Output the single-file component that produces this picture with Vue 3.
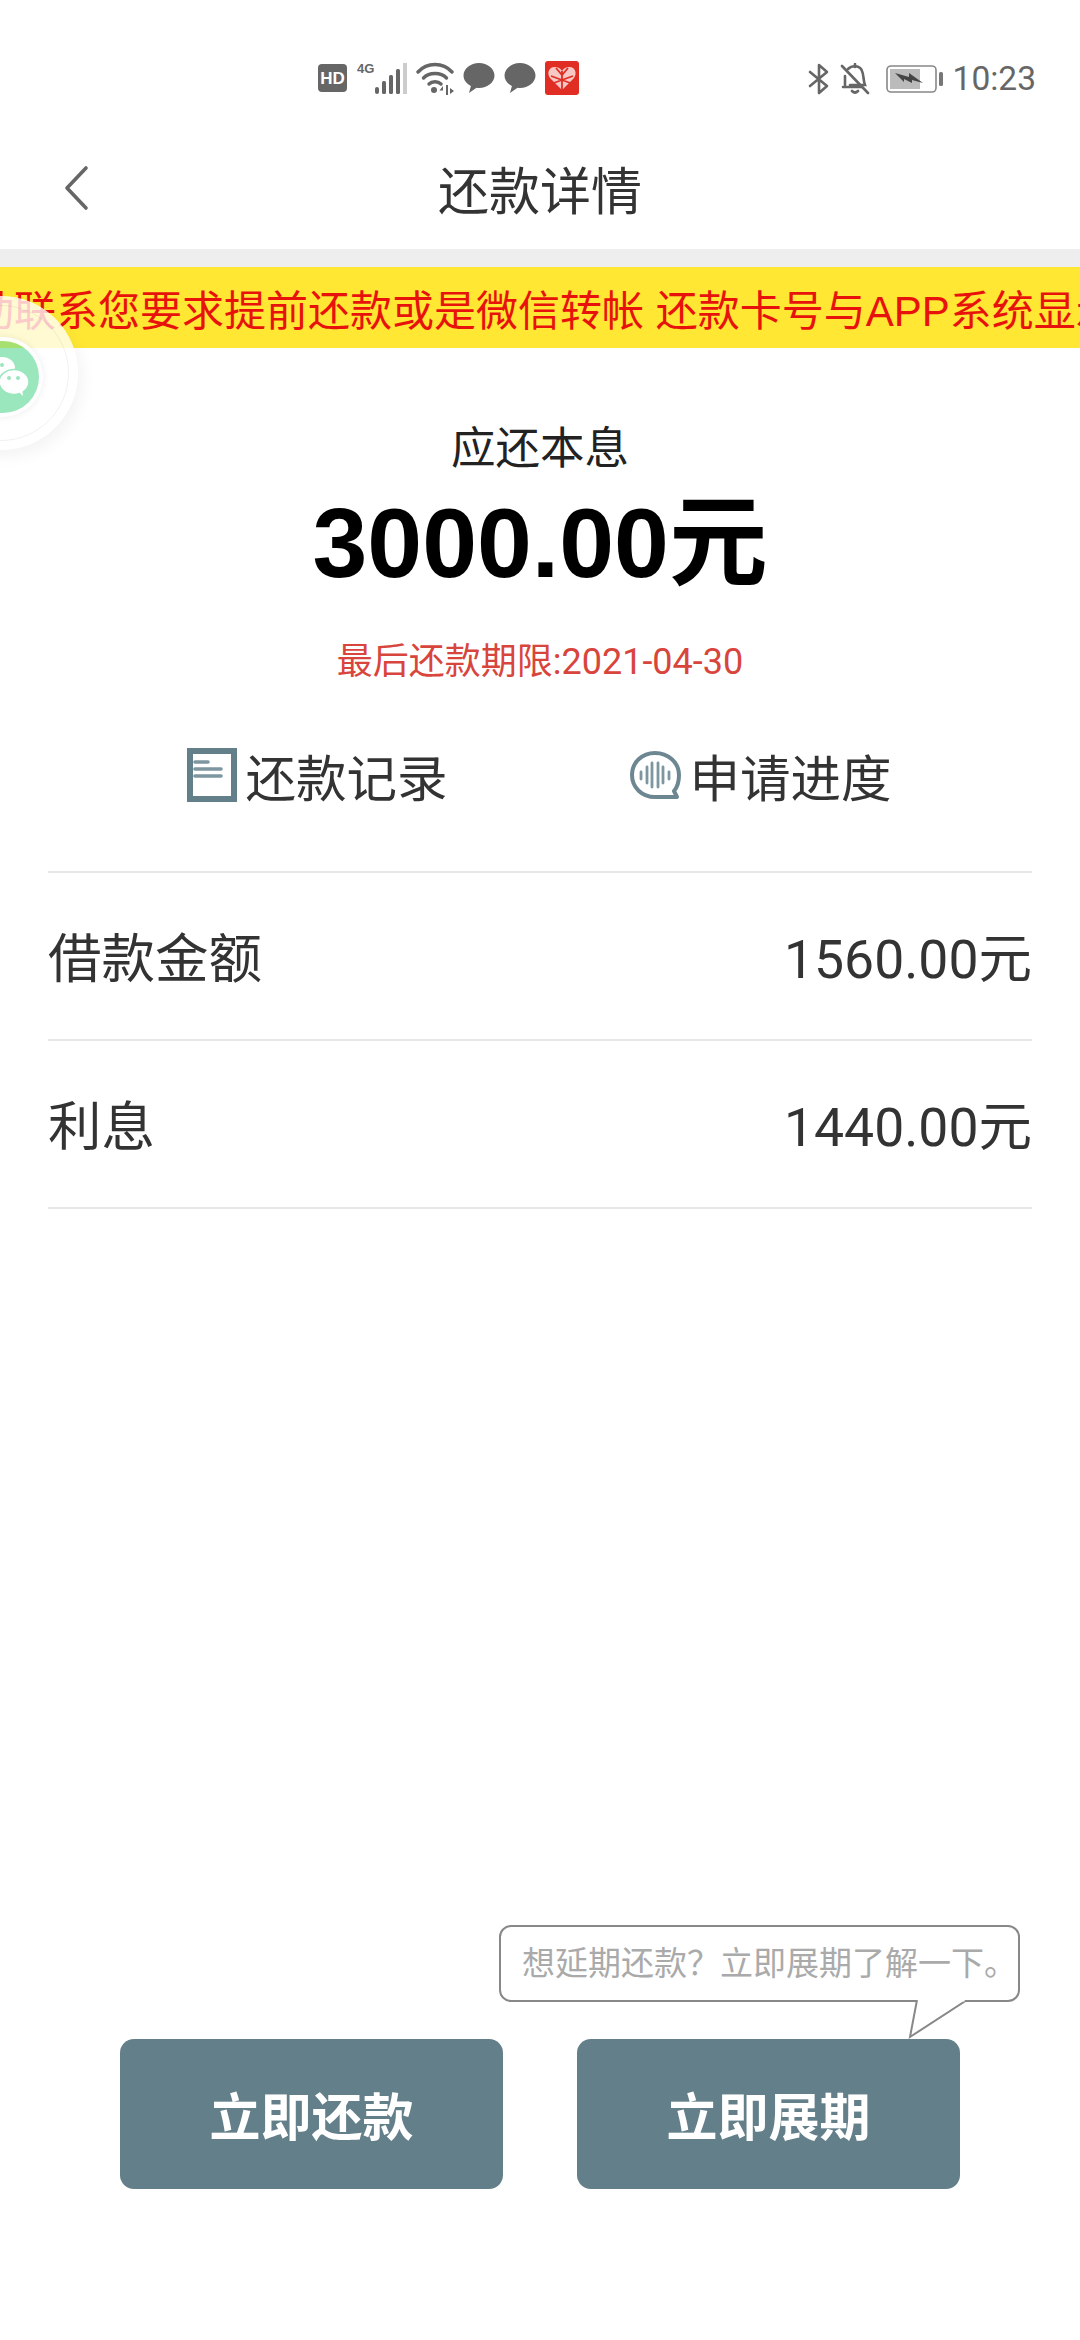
<template>
  <div class="page">
    <div class="statusbar">
      <div class="st-left">
        <svg width="30" height="30" viewBox="0 0 30 30"><rect y="1" width="29" height="28" rx="4" fill="#666"/><text x="14.500" y="21" text-anchor="middle" class="hd">HD</text></svg>
        <svg width="50" height="34" viewBox="0 0 50 34">
          <text x="0" y="12" class="fourg">4G</text>
          <rect x="18" y="26" width="4" height="7" rx="2" fill="#666"/>
          <rect x="25" y="20" width="4" height="13" rx="1.500" fill="#666"/>
          <rect x="32" y="14" width="4" height="19" rx="1.500" fill="#666"/>
          <rect x="39" y="8" width="4" height="25" rx="1.500" fill="#666"/>
          <rect x="46" y="2" width="4" height="31" fill="#ccc"/>
        </svg>
        <svg width="38" height="34" viewBox="0 0 38 34">
          <g fill="none" stroke="#666" stroke-width="3.400" stroke-linecap="round">
            <path d="M2 11C11 1 27 1 36 11"/><path d="M7.500 17C13 11 25 11 30.500 17"/><path d="M13 23C16 20 22 20 25 23"/>
          </g>
          <circle cx="18" cy="29" r="3" fill="#666"/>
          <path d="M27 25l-3.500 4.500H27zM30 24h2v10h-2zM34 27l4 3-4 3z" fill="#666"/>
        </svg>
        <svg width="32" height="32" viewBox="0 0 32 32"><path d="M16 1C7.500 1 .5 6.700.5 13.500c0 4.400 3 8.300 7.400 10.500L6 31l7.500-5.200c.8.100 1.700.200 2.500.200 8.500 0 15.500-5.600 15.500-12.500S24.500 1 16 1z" fill="#666"/></svg>
        <svg width="32" height="32" viewBox="0 0 32 32"><path d="M16 1C7.500 1 .5 6.700.5 13.500c0 4.400 3 8.300 7.400 10.500L6 31l7.500-5.200c.8.100 1.700.200 2.500.200 8.500 0 15.500-5.600 15.500-12.500S24.500 1 16 1z" fill="#666"/></svg>
        <svg width="34" height="34" viewBox="0 0 34 34">
          <rect width="34" height="34" rx="3" fill="#e02e24"/>
          <path d="M17 29L5 17C1.500 12 4 6 9.500 6c3.500 0 6 1.500 7.500 4 1.500-2.500 4-4 7.500-4C30 6 32.500 12 29 17z" fill="#f6c9c5"/>
          <path d="M17 10v19M6 15l22 8M28 15L6 23M11 7l6 7 6-7" stroke="#e02e24" stroke-width="1.800" fill="none"/>
        </svg>
      </div>
      <div class="st-right">
        <svg class="bt" width="22" height="32" viewBox="0 0 22 32"><path d="M2 9l17 14-8 7V2l8 7L2 23" fill="none" stroke="#666" stroke-width="2.600" stroke-linecap="round" stroke-linejoin="round"/></svg>
        <svg class="bell" width="30" height="32" viewBox="0 0 30 32">
          <path d="M5 22V13M8 6c4-4 12-4 14 2 2 4 1 9 3 14H10M3 24h19M12 28c2 2 4 2 6 0" fill="none" stroke="#666" stroke-width="2.600" stroke-linecap="round"/>
          <path d="M15 1v3M2 3l26 27" fill="none" stroke="#666" stroke-width="2.600" stroke-linecap="round"/>
        </svg>
        <svg class="batt" width="58" height="28" viewBox="0 0 58 28">
          <rect x="1" y="1" width="49" height="26" rx="4" fill="none" stroke="#888" stroke-width="1.600"/>
          <rect x="4" y="4" width="30" height="20" fill="#bbb"/>
          <rect x="53" y="7" width="4" height="14" rx="1.500" fill="#777"/>
          <path d="M9 8l14 4 0-4 14 10-11-3 0 3-8-4 0 3z" fill="#444"/>
        </svg>
        <span class="time">10:23</span>
      </div>
    </div>

    <header class="navbar">
      <svg class="back" width="26" height="46" viewBox="0 0 26 46"><path d="M23 3L4 23l19 20" fill="none" stroke="#666" stroke-width="3.600" stroke-linecap="round" stroke-linejoin="round"/></svg>
      <h1 class="title">还款详情</h1>
    </header>

    <div class="notice">
      <span class="notice-text">主动联系您要求提前还款或是微信转帐 还款卡号与APP系统显示</span>
    </div>

    <div class="float-wx">
      <div class="ring">
        <div class="wx">
          <svg width="72" height="72" viewBox="0 0 72 72">
            <ellipse cx="35" cy="27" rx="13" ry="11" fill="#fff"/>
            <ellipse cx="47" cy="41" rx="15" ry="12.500" fill="#fff" stroke="#9ae6bd" stroke-width="1.500"/>
            <path d="M51 50l5 5-1-8z" fill="#fff"/>
            <circle cx="35" cy="24" r="2" fill="#9ae6bd"/>
            <circle cx="42" cy="37" r="2" fill="#9ae6bd"/>
            <circle cx="51" cy="37" r="2" fill="#9ae6bd"/>
          </svg>
        </div>
      </div>
    </div>

    <main class="main">
      <section class="summary">
        <div class="sum-label">应还本息</div>
        <div class="sum-amount">3000.00元</div>
        <div class="sum-date">最后还款期限:2021-04-30</div>
      </section>

      <div class="links">
        <div class="link">
          <svg width="50" height="54" viewBox="0 0 50 54">
            <rect x="3" y="3" width="44" height="48" fill="#fff" stroke="#637f89" stroke-width="6"/>
            <path d="M8 14h13M8 21h26M8 28h26" stroke="#7d97a1" stroke-width="3.600" stroke-linecap="round"/>
          </svg>
          <span>还款记录</span>
        </div>
        <div class="link">
          <svg width="52" height="50" viewBox="0 0 52 50">
            <path d="M26 3C13 3 3 12.500 3 25s10 22 23 22h22l-3-6c3.500-4 5-9.500 5-16C50 12.500 39 3 26 3z" fill="#fff" stroke="#6c8791" stroke-width="4" stroke-linejoin="round"/>
            <path d="M12 22v7M18 17v16M23 13v24M29 13v24M34 17v16M40 22v7" stroke="#7d97a1" stroke-width="2.800" stroke-linecap="round"/>
          </svg>
          <span>申请进度</span>
        </div>
      </div>

      <div class="rows">
        <div class="row" v-for="r in rows" :key="r.label">
          <span>{{ r.label }}</span>
          <span>{{ r.value }}</span>
        </div>
      </div>
    </main>

    <footer class="actions">
      <button class="btn">立即还款</button>
      <div class="btn-wrap">
        <div class="tip">
          想延期还款&#65311;立即展期了解一下。
          <svg class="tip-tail" width="64" height="40" viewBox="0 0 64 40"><path d="M10 0L3 37 60 0" fill="#fff" stroke="#888" stroke-width="2"/><path d="M11.500 0h46" stroke="#fff" stroke-width="3"/></svg>
        </div>
        <button class="btn">立即展期</button>
      </div>
    </footer>
  </div>
</template>

<script setup>
const rows = [
  { label: '借款金额', value: '1560.00元' },
  { label: '利息', value: '1440.00元' },
]
</script>

<style>
html, body { background: #fff; }
</style>

<style scoped>
.page { position: relative; width: 1080px; height: 2340px; overflow: hidden; display: flex; flex-direction: column; background: #fff; color: #333; font-family: Roboto, "Noto Sans CJK SC", sans-serif; }

.statusbar { height: 130px; box-sizing: border-box; padding: 61px 44px 0 318px; display: flex; justify-content: space-between; align-items: flex-start; }
.st-left { display: flex; align-items: center; gap: 9px; }
.st-right { display: flex; align-items: center; }
.hd { font: 700 17px "Liberation Sans", sans-serif; fill: #fff; }
.fourg { font: 700 13px "Liberation Sans", sans-serif; fill: #666; }
.bell { margin-left: 10px; }
.batt { margin-left: 16px; }
.time { margin-left: 9px; font-size: 33.500px; line-height: 36px; color: #666; }

.navbar { height: 119px; position: relative; display: flex; align-items: center; justify-content: center; }
.back { position: absolute; left: 63px; top: 35px; }
.title { margin: 0 0 4px; font-size: 51px; font-weight: 400; color: #333; }

.notice { margin-top: 18px; box-shadow: 0 -18px 0 #eee; height: 81px; background: #ffe733; overflow: hidden; white-space: nowrap; display: flex; align-items: center; }
.notice-text { margin-left: -70px; font-family: "Liberation Sans", "Noto Sans CJK SC", sans-serif; font-size: 42px; color: #e8120c; }

.float-wx { position: absolute; left: -76px; top: 296px; width: 154px; height: 154px; border-radius: 50%; background: rgba(255,255,255,.78); box-shadow: 4px 6px 16px rgba(0,0,0,.05); display: flex; align-items: center; justify-content: center; }
.ring { width: 134px; height: 134px; border-radius: 50%; border: 1px solid rgba(0,0,0,.06); display: flex; align-items: center; justify-content: center; }
.wx { width: 72px; height: 72px; margin-left: 4px; margin-top: 8px; border-radius: 50%; background: linear-gradient(#a6e070 9.500%, #9ae6bd 9.500%); box-shadow: 0 0 0 4px rgba(255,255,255,.9), 0 0 6px 5px rgba(0,0,0,.06); overflow: hidden; }
.wx svg { display: block; }

.main { padding: 0 48px; }
.summary { display: flex; flex-direction: column; align-items: center; }
.sum-label { margin-top: 73px; font-size: 44.500px; line-height: 56px; color: #222; }
.sum-amount { margin-top: 10px; font-family: "Liberation Sans", "Noto Sans CJK SC", sans-serif; font-size: 98.600px; font-weight: 700; line-height: 112px; color: #000; }
.sum-date { margin-top: 39px; font-size: 36px; line-height: 48px; color: #d8453c; }

.links { display: flex; justify-content: center; gap: 181px; height: 187px; border-bottom: 2px solid #e8e8e8; box-sizing: border-box; align-items: center; padding: 0 2px 7px 0; }
.link { display: flex; align-items: center; gap: 9px; font-size: 50.500px; color: #333; }

.row { height: 168px; box-sizing: border-box; padding-bottom: 4px; border-bottom: 2px solid #e8e8e8; display: flex; justify-content: space-between; align-items: center; font-size: 53.500px; color: #333; }

.actions { margin-top: auto; padding: 0 120px 151px; display: flex; justify-content: space-between; }
.btn-wrap { position: relative; }
.btn { display: block; width: 383px; height: 150px; border: 0; border-radius: 14px; background: #637f89; color: #fff; font-family: inherit; font-size: 51px; font-weight: 700; }
.tip { position: absolute; left: -78px; top: -114px; width: 521px; height: 77px; box-sizing: border-box; border: 2px solid #888; border-radius: 12px; background: #fff; font-size: 33px; line-height: 73px; padding-left: 21px; color: #aaa; white-space: nowrap; }
.tip-tail { position: absolute; left: 406px; top: 73px; }
</style>
